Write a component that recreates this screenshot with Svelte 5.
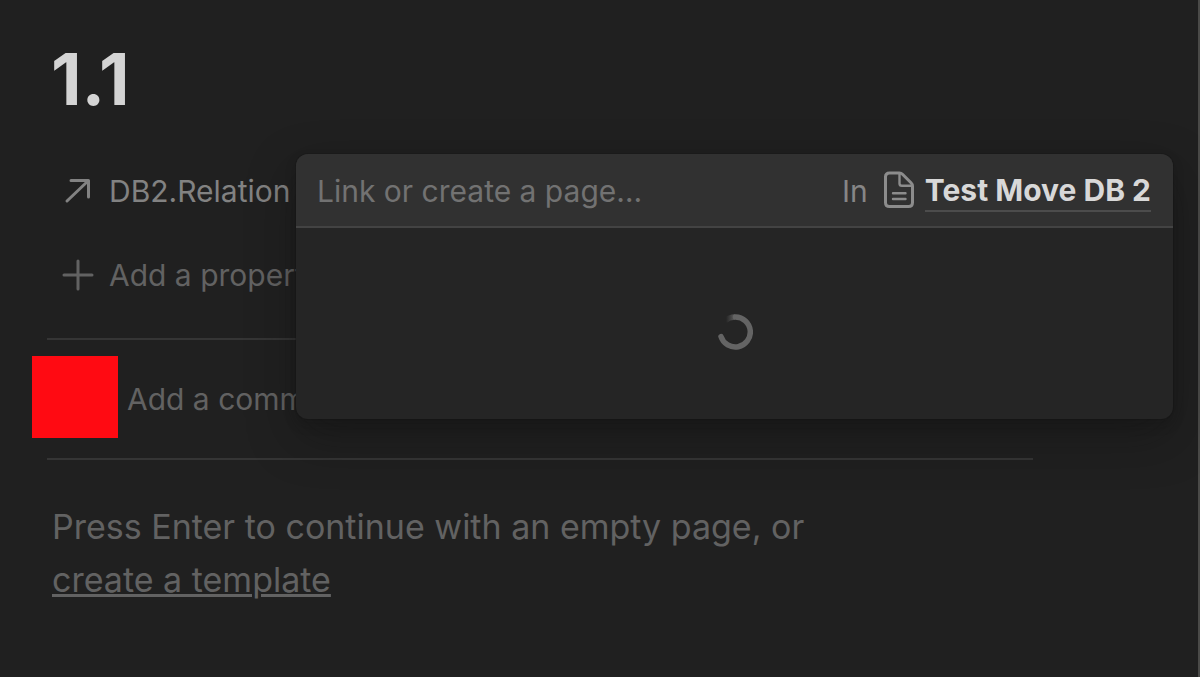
<script lang="ts">
	let title = $state('1.1');
	let query = $state('');
	let comment = $state('');

	const database = 'Test Move DB 2';
</script>

<main class="page">
	<h1>{title}</h1>

	<section class="properties">
		<div class="relation">
			<button class="property name">
				<svg width="32" height="32" viewBox="0 0 32 32" fill="none" stroke="currentColor" stroke-width="3" stroke-linecap="round" stroke-linejoin="round">
					<path d="M5 26L26 6M9 5.500H26.500V22" />
				</svg>
				DB2.Relation
			</button>

			<div class="picker" role="dialog" aria-label="Link a page">
				<header class="picker-head">
					<input type="text" bind:value={query} placeholder="Link or create a page…" aria-label="Link or create a page" />
					<span class="in">In</span>
					<svg class="doc" width="32" height="40" viewBox="0 0 32 40" fill="none" stroke="currentColor" stroke-linejoin="round" stroke-linecap="round">
						<path stroke-width="3" d="M6.500 2H16.500C18 2 18.700 2.500 19.500 3.300L28 11.800C29 12.800 29.500 13.500 29.500 15V31.500C29.500 34 28 35.500 25.500 35.500H6.500C4 35.500 2.500 34 2.500 31.500V6C2.500 3.500 4 2 6.500 2Z" />
						<path stroke-width="2.400" d="M16.500 3V12.500C16.500 14 17.300 14.800 18.800 14.800H28.500" />
						<path stroke-width="2.400" d="M10 22.200H22.500M10 28H22.500" />
					</svg>
					<a href="#database">{database}</a>
				</header>
				<div class="results" role="status" aria-label="Loading">
					<svg width="36" height="36" viewBox="0 0 36 36" fill="none" stroke-width="5.500">
						<defs>
							<linearGradient id="fade" x1="9" y1="0" x2="19" y2="0" gradientUnits="userSpaceOnUse">
								<stop offset="0" stop-color="#646464" stop-opacity="0" />
								<stop offset="1" stop-color="#646464" />
							</linearGradient>
						</defs>
						<path stroke="url(#fade)" d="M8 6.800A15 15 0 0 1 18 3" />
						<path stroke="#646464" stroke-linecap="round" d="M18.500 3A15 15 0 1 1 4 22.500" />
					</svg>
				</div>
			</div>
		</div>

		<button class="property">
			<svg width="32" height="32" viewBox="0 0 32 32" fill="none" stroke="currentColor" stroke-width="3" stroke-linecap="round">
				<path d="M16 2V30M2 16H30" />
			</svg>
			Add a property
		</button>
	</section>

	<section class="comments">
		<div class="avatar"></div>
		<input type="text" bind:value={comment} placeholder="Add a comment…" aria-label="Add a comment" />
	</section>

	<p class="hint">
		Press Enter to continue with an empty page, or<br />
		<a href="#template">create a template</a>
	</p>
</main>

<style>
	:global(body) {
		background: #202020;
	}

	.page {
		box-sizing: border-box;
		min-height: 100vh;
		padding: 37px 165px 48px 47px;
		border-right: 2px solid #4a4a48;
		font-family: Inter, 'Liberation Sans', sans-serif;
		font-size: 30px;
		color: #626262;
	}

	button,
	input {
		font: inherit;
		color: inherit;
		background: none;
		border: none;
		padding: 0;
		outline: none;
	}

	h1 {
		margin: 0 0 40px 4px;
		font-size: 71px;
		line-height: 84px;
		font-weight: 700;
		color: #d4d4d4;
	}

	.properties {
		display: flex;
		flex-direction: column;
		align-items: stretch;
		gap: 24px;
		padding-bottom: 33px;
	}

	.relation {
		position: relative;
	}

	.property {
		display: flex;
		align-items: center;
		gap: 15px;
		height: 60px;
		padding-left: 15px;
		white-space: nowrap;
		cursor: pointer;
	}
	.property.name {
		color: #828282;
	}

	.picker {
		position: absolute;
		top: -7px;
		left: 249px;
		right: -140px;
		z-index: 1;
		overflow: hidden;
		border-radius: 12px;
		background: #252525;
		box-shadow: 0 0 0 1px rgba(15, 15, 15, 0.2), 0 6px 12px rgba(15, 15, 15, 0.2), 0 18px 48px rgba(15, 15, 15, 0.4);
	}

	.picker-head {
		display: flex;
		align-items: center;
		height: 70px;
		padding: 2px 22px 0 21px;
		background: #313131;
		border-bottom: 2px solid #434343;
	}
	.picker-head input {
		flex: 1;
		min-width: 0;
	}
	.picker-head a {
		color: #d8d8d8;
		font-weight: 700;
		line-height: 40px;
		text-decoration: none;
		border-bottom: 2px solid #4c4c4c;
	}

	input::placeholder {
		color: inherit;
		opacity: 1;
	}
	.picker-head input {
		color: #727272;
	}

	.in {
		color: #868686;
	}

	.doc {
		margin: 0 10px 0 15px;
		color: #8c8c8c;
	}

	.results {
		display: flex;
		align-items: center;
		justify-content: center;
		padding: 86px 0 69px;
	}

	.comments {
		display: flex;
		align-items: center;
		gap: 9px;
		height: 118px;
		border-top: 2px solid #353535;
		border-bottom: 2px solid #353535;
	}
	.comments input {
		flex: 1;
		min-width: 0;
	}

	.avatar {
		width: 86px;
		height: 82px;
		margin: 0 0 4px -15px;
		background: #ff0a12;
		flex-shrink: 0;
	}

	.hint {
		margin: 40px 0 0 5px;
		font-size: 34px;
		line-height: 53px;
	}
	.hint a {
		color: inherit;
		text-decoration-thickness: 3px;
	}
</style>
